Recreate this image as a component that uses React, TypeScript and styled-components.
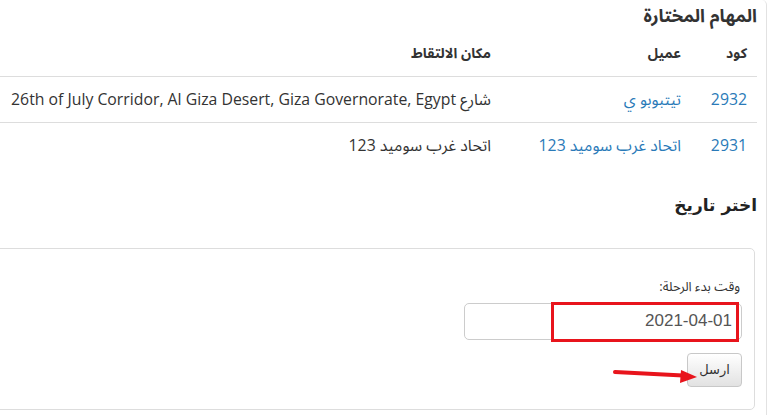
import React from "react";
import styled, { createGlobalStyle } from "styled-components";

const GlobalStyle = createGlobalStyle`
  html, body { margin: 0; padding: 0; background: #fff; }
  body {
    direction: rtl;
    font-family: "Open Sans", "Noto Sans Arabic", "DejaVu Sans", sans-serif;
    font-size: 14px;
    color: #333;
  }
  * { box-sizing: border-box; }
`;

const Frame = styled.div`
  width: 767px;
  min-height: 415px;
  margin: 0 auto 0 0;
  border-right: 1px solid #e2e2e2;
  border-top-right-radius: 5px;
  padding-right: 9px;
  overflow: hidden;
`;

const Title = styled.h3`
  margin: 0;
  padding-top: 2px;
  height: 30px;
  line-height: 26px;
  font-size: 18px;
  font-weight: 700;
  color: #333;
`;

const Table = styled.table`
  width: 757px;
  border-collapse: collapse;
  table-layout: fixed;
`;

const Th = styled.th<{ $w?: number }>`
  width: ${(p) => (p.$w ? `${p.$w}px` : "auto")};
  text-align: right;
  padding: 12px 10px;
  line-height: 21px;
  height: 46px;
  font-size: 14px;
  font-weight: 700;
  border-bottom: 1px solid #ddd;
`;

const Td = styled.td<{ $last?: boolean }>`
  text-align: right;
  padding: 12px 10px;
  line-height: 21px;
  height: ${(p) => (p.$last ? "45px" : "46px")};
  font-size: 15.8px;
  border-bottom: ${(p) => (p.$last ? "none" : "1px solid #ddd")};
  white-space: nowrap;
`;

const Link = styled.a`
  color: #2a7ab8;
  text-decoration: none;
`;

const Section = styled.h3`
  margin: 23px 0 0;
  height: 28px;
  line-height: 28px;
  font-family: "DejaVu Sans", sans-serif;
  font-size: 17px;
  font-weight: 700;
  color: #222;
`;

const Panel = styled.div`
  margin: 29px 2px 0 -6px;
  height: 162px;
  border: 1px solid #ddd;
  border-radius: 5px;
  padding: 29px 12px 0;
`;

const Label = styled.label`
  display: block;
  padding-right: 2px;
  height: 17px;
  line-height: 17px;
  font-size: 13px;
  color: #333;
`;

const Field = styled.div`
  position: relative;
  margin-top: 8px;
  width: 278px;
  height: 37px;
`;

const Input = styled.input`
  width: 278px;
  height: 37px;
  border: 1px solid #ccc;
  border-radius: 5px;
  padding: 0 9px;
  font-family: "Liberation Sans", Arial, sans-serif;
  font-size: 17px;
  color: #555;
  text-align: right;
  direction: ltr;
  background: #fff;
`;

const Highlight = styled.div`
  position: absolute;
  top: -1px;
  right: 3px;
  width: 188px;
  height: 40px;
  border: 3px solid #e8141c;
  pointer-events: none;
`;

const ButtonRow = styled.div`
  position: relative;
  margin-top: 13px;
  height: 34px;
`;

const Button = styled.button`
  height: 34px;
  width: 55px;
  margin-right: 0;
  border: 1px solid #c8c8c8;
  border-radius: 4px;
  background: linear-gradient(#ffffff, #e2e2e2);
  font-family: "DejaVu Sans", sans-serif;
  font-size: 13px;
  color: #333;
  padding: 0;
`;

const Arrow = styled.svg`
  position: absolute;
  top: 10px;
  right: 45px;
  width: 84px;
  height: 20px;
  overflow: visible;
`;

const rows = [
  {
    code: "2932",
    client: "تيتبوبو ي",
    place: "شارع 26th of July Corridor, Al Giza Desert, Giza Governorate, Egypt",
  },
  { code: "2931", client: "اتحاد غرب سوميد 123", place: "اتحاد غرب سوميد 123" },
];

export default function App() {
  return (
    <>
      <GlobalStyle />
      <Frame>
        <Title>المهام المختارة</Title>
        <Table>
          <thead>
            <tr>
              <Th $w={66}>كود</Th>
              <Th $w={190}>عميل</Th>
              <Th>مكان الالتقاط</Th>
            </tr>
          </thead>
          <tbody>
            {rows.map((r, i) => (
              <tr key={r.code}>
                <Td $last={i === rows.length - 1}>
                  <Link href="#">{r.code}</Link>
                </Td>
                <Td $last={i === rows.length - 1}>
                  <Link href="#">{r.client}</Link>
                </Td>
                <Td $last={i === rows.length - 1}>{r.place}</Td>
              </tr>
            ))}
          </tbody>
        </Table>
        <Section>اختر تاريخ</Section>
        <Panel>
          <Label>وقت بدء الرحلة:</Label>
          <Field>
            <Input type="text" defaultValue="2021-04-01" />
            <Highlight />
          </Field>
          <ButtonRow>
            <Button type="button">ارسل</Button>
            <Arrow viewBox="0 0 84 20">
              <line x1="2" y1="9" x2="70" y2="12.5" stroke="#e8141c" strokeWidth="4" strokeLinecap="round" />
              <polygon points="84,14 68,7 67,20" fill="#e8141c" />
            </Arrow>
          </ButtonRow>
        </Panel>
      </Frame>
    </>
  );
}
